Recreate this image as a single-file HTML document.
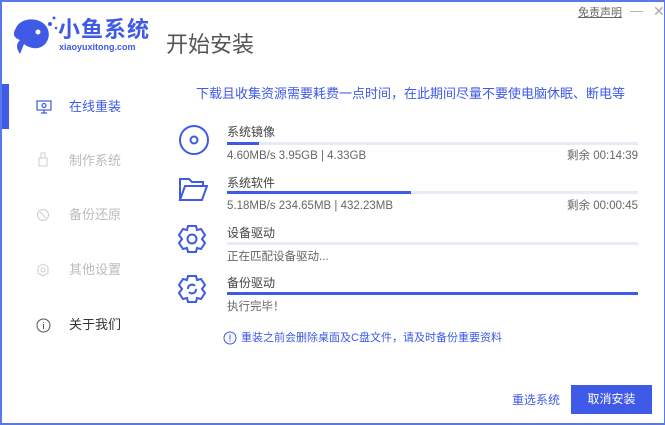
<!DOCTYPE html>
<html><head><meta charset="utf-8"><style>
*{margin:0;padding:0;box-sizing:border-box}
body{width:665px;height:425px;background:#fff;font-family:"Liberation Sans","Noto Sans CJK SC",sans-serif;position:relative;overflow:hidden;color:#333}
.frame{position:absolute;left:0;top:0;width:665px;height:425px;border:2px solid #5a78ee;border-right-width:1px;border-top-width:2px}
.a{position:absolute;white-space:nowrap;line-height:16px}
.side{font-size:13px;color:#bbb}
.lab{font-size:12px;color:#444}
.st{font-size:11.5px;color:#666}
.bar{position:absolute;left:227px;width:411px;height:3px;background:#e6ebf6}
.bar i{display:block;height:3px;background:#3e5ae6}
</style></head><body>
<div class="frame"></div>
<svg class="a" style="left:12px;top:14px" width="50" height="42" viewBox="0 0 50 42">
<path d="M4 14 C8 4 26 2 34 12 C40 20 36 32 26 34 C20 35 14 32 12 30 L8 40 C4 34 4 30 8 26 C2 24 0 20 4 14Z" fill="#3e5ae6"/>
<circle cx="26" cy="18" r="2.5" fill="#fff"/>
<circle cx="38" cy="10" r="2" fill="#3e5ae6"/><circle cx="42" cy="4" r="1.5" fill="#3e5ae6"/><circle cx="44" cy="14" r="1.3" fill="#3e5ae6"/>
</svg>
<div class="a" style="left:58px;top:18px;font-size:22px;line-height:24px;font-weight:bold;color:#3e5ae6;letter-spacing:1px">小鱼系统</div>
<div class="a" style="left:59px;top:41px;font-size:9px;line-height:12px;font-weight:bold;color:#3e5ae6">xiaoyuxitong.com</div>
<div class="a" style="left:166px;top:31px;font-size:22px;line-height:28px;color:#555">开始安装</div>
<div class="a" style="left:578px;top:5px;font-size:11px;color:#666;text-decoration:underline">免责声明</div>
<div class="a" style="left:630px;top:3px;font-size:13px;color:#aaa">—</div>
<div class="a" style="left:653px;top:3px;font-size:14px;color:#aaa">✕</div>
<div class="a" style="left:2px;top:84px;width:7px;height:45px;background:#3e5ae6"></div>
<svg class="a" style="left:36px;top:100px" width="16" height="14" viewBox="0 0 16 14" fill="none" stroke="#3e5ae6" stroke-width="1.2"><rect x="1" y="1" width="14" height="9"/><path d="M8 10v3M5 13h6"/><circle cx="8" cy="5.5" r="2"/></svg>
<div class="a side" style="left:69px;top:99px;color:#3e5ae6">在线重装</div>
<svg class="a" style="left:38px;top:152px" width="10" height="15" viewBox="0 0 10 15" fill="none" stroke="#ccc"><rect x="1" y="6" width="8" height="8"/><rect x="3" y="1" width="4" height="5"/></svg>
<div class="a side" style="left:69px;top:153px">制作系统</div>
<svg class="a" style="left:36px;top:208px" width="14" height="14" viewBox="0 0 14 14" fill="none" stroke="#ccc"><circle cx="7" cy="7" r="5.5"/><path d="M4 4l6 6"/></svg>
<div class="a side" style="left:69px;top:207px">备份还原</div>
<svg class="a" style="left:36px;top:263px" width="14" height="14" viewBox="0 0 14 14" fill="none" stroke="#ccc"><path d="M7 1l5 3v6l-5 3-5-3V4z"/><circle cx="7" cy="7" r="2"/></svg>
<div class="a side" style="left:69px;top:262px">其他设置</div>
<svg class="a" style="left:36px;top:318px" width="15" height="15" viewBox="0 0 15 15" fill="none" stroke="#555"><circle cx="7.5" cy="7.5" r="6.5"/><path d="M7.5 6v5M7.5 4v1"/></svg>
<div class="a side" style="left:69px;top:317px;color:#333">关于我们</div>
<div class="a" style="left:196px;top:86px;font-size:13px;color:#3e5ae6">下载且收集资源需要耗费一点时间，在此期间尽量不要使电脑休眠、断电等</div>
<svg class="a" style="left:178px;top:124px" width="32" height="32" viewBox="0 0 32 32" fill="none" stroke="#3e5ae6" stroke-width="2"><circle cx="16" cy="16" r="14"/><circle cx="16" cy="16" r="3.5"/></svg>
<div class="a lab" style="left:227px;top:124px">系统镜像</div>
<div class="bar" style="top:142px"><i style="width:32px"></i></div>
<div class="a st" style="left:227px;top:148px">4.60MB/s 3.95GB | 4.33GB</div>
<div class="a st" style="right:27px;top:148px">剩余 00:14:39</div>
<svg class="a" style="left:178px;top:176px" width="30" height="26" viewBox="0 0 30 26" fill="none" stroke="#3e5ae6" stroke-width="2"><path d="M2 24V3h9l3 3h11v4M2 24h22l5-14H7z"/></svg>
<div class="a lab" style="left:227px;top:175px">系统软件</div>
<div class="bar" style="top:191px"><i style="width:184px"></i></div>
<div class="a st" style="left:227px;top:198px">5.18MB/s 234.65MB | 432.23MB</div>
<div class="a st" style="right:27px;top:198px">剩余 00:00:45</div>
<svg class="a" style="left:177px;top:224px" width="30" height="30" viewBox="0 0 30 30" fill="none" stroke="#3e5ae6" stroke-width="2"><path d="M11 2h8l1 4 4-1 4 6-3 4 3 4-4 6-4-1-1 4h-8l-1-4-4 1-4-6 3-4-3-4 4-6 4 1z"/><circle cx="15" cy="15" r="4.5"/></svg>
<div class="a lab" style="left:227px;top:225px">设备驱动</div>
<div class="bar" style="top:242px"></div>
<div class="a st" style="left:227px;top:249px">正在匹配设备驱动...</div>
<svg class="a" style="left:177px;top:274px" width="30" height="30" viewBox="0 0 30 30" fill="none" stroke="#3e5ae6" stroke-width="2"><path d="M11 2h8l1 4 4-1 4 6-3 4 3 4-4 6-4-1-1 4h-8l-1-4-4 1-4-6 3-4-3-4 4-6 4 1z"/><path d="M11 15a4 4 0 0 1 7-3M19 15a4 4 0 0 1-7 3"/></svg>
<div class="a lab" style="left:227px;top:275px">备份驱动</div>
<div class="bar" style="top:292px"><i style="width:411px"></i></div>
<div class="a st" style="left:227px;top:299px">执行完毕！</div>
<svg class="a" style="left:223px;top:331px" width="14" height="14" viewBox="0 0 14 14" fill="none" stroke="#3e5ae6"><circle cx="7" cy="7" r="6"/><path d="M7 3.5v5M7 9.5v1.2"/></svg>
<div class="a" style="left:241px;top:330px;font-size:11px;color:#3e5ae6">重装之前会删除桌面及C盘文件，请及时备份重要资料</div>
<div class="a" style="left:512px;top:392px;font-size:12px;color:#3e5ae6">重选系统</div>
<div class="a" style="left:571px;top:385px;width:81px;height:29px;background:#3e5ae6;color:#fff;font-size:12px;text-align:center;line-height:29px">取消安装</div>
</body></html>
